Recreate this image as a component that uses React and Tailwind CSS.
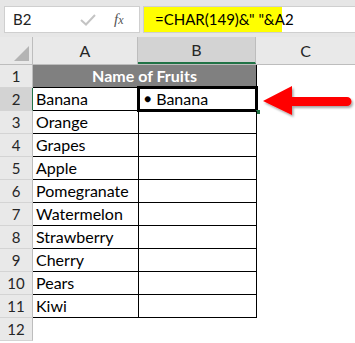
import React from "react"

const fruits = ["Banana", "Orange", "Grapes", "Apple", "Pomegranate", "Watermelon", "Strawberry", "Cherry", "Pears", "Kiwi"]

const font = { fontFamily: "Lato, 'Open Sans', sans-serif" }

const RowHead = ({ n, active }) => (
  <div
    className={`w-[33px] shrink-0 flex items-center justify-center text-[15px] text-[#262626] border-r ${
      active ? "bg-[#d3d3d3] border-[#217346]" : "bg-[#e9e9e9] border-[#bdbdbd]"
    } border-b border-b-[#d4d4d4]`}
  >
    {n}
  </div>
)

const App = () => {
  return (
    <div className="w-[355px] h-[343px] bg-white overflow-hidden relative" style={font}>
      {/* formula bar */}
      <div className="h-[37px] bg-[#e6e6e6] pt-[6px] flex">
        <div className="ml-[4px] w-[136px] h-[27px] bg-white border border-[#cfcfcf] flex items-center text-[15px] text-[#222]">
          <span className="pl-[8px] w-[72px]">B2</span>
          <svg width="16" height="12" viewBox="0 0 16 12" className="ml-[3px]">
            <path d="M1 6 L6 10.5 L15 1" fill="none" stroke="#c4c4c4" strokeWidth="2" />
          </svg>
          <span className="ml-[18px] text-[15px] italic text-[#555]" style={{ fontFamily: "'Liberation Serif', serif" }}>
            f<span className="text-[12px]">x</span>
          </span>
        </div>
        <div className="ml-[3px] flex-1 h-[27px] bg-white border border-[#cfcfcf] border-r-0 flex">
          <div className="w-[138px] h-full bg-[#ffff00] flex items-center pl-[11px] text-[15px] text-black whitespace-pre">
            {'=CHAR(149)&" "&A2'}
          </div>
        </div>
      </div>

      {/* column headers */}
      <div className="h-[28px] flex bg-[#e9e9e9] border-b border-[#bdbdbd] text-[16px] text-[#262626]">
        <div className="w-[33px] shrink-0 border-r border-[#bdbdbd] flex items-end justify-end pr-[3px] pb-[3px]">
          <svg width="15" height="15" viewBox="0 0 15 15">
            <path d="M15 0 L15 15 L0 15 Z" fill="#b4b4b4" />
          </svg>
        </div>
        <div className="w-[105px] border-r border-[#bdbdbd] flex items-center justify-center">A</div>
        <div className="w-[118px] bg-[#d3d3d3] border-r border-[#bdbdbd] border-b-2 border-b-[#217346] flex items-center justify-center">B</div>
        <div className="flex-1 flex items-center justify-center">C</div>
      </div>

      {/* row 1 */}
      <div className="h-[23px] flex">
        <RowHead n={1} />
        <div className="w-[224px] bg-[#808080] border-r border-b border-black flex items-center justify-center text-white font-bold text-[16px]">
          Name of Fruits
        </div>
        <div className="flex-1" />
      </div>

      {fruits.map((f, i) => (
        <div key={f} className="h-[23px] flex">
          <RowHead n={i + 2} active={i === 0} />
          <div className="w-[106px] border-r border-b border-black flex items-center pl-[3px] text-[16px] text-black">
            {f}
          </div>
          <div className="w-[118px] border-r border-b border-black flex items-center pl-[5px] text-[16px] text-black relative">
            {i === 0 && (
              <>
                <span className="mr-[5px] text-[12px]">●</span>Banana
                <div className="absolute -left-[2px] -top-[2px] -right-[2px] -bottom-[2px] border-[3px] border-black" />
                <div className="absolute -right-[4px] -bottom-[4px] w-[4px] h-[4px] bg-[#217346]" />
              </>
            )}
          </div>
          <div className="flex-1" />
        </div>
      ))}

      <div className="h-[23px] flex">
        <RowHead n={12} />
        <div className="flex-1" />
      </div>

      {/* arrow */}
      <svg className="absolute left-[262px] top-[84px]" width="93" height="36" viewBox="0 0 93 36">
        <defs>
          <filter id="sh" x="-10%" y="-20%" width="130%" height="160%">
            <feDropShadow dx="1.5" dy="2" stdDeviation="1.2" floodColor="#000" floodOpacity="0.35" />
          </filter>
        </defs>
        <path d="M1 17 L30 2 L30 13 L85 13 A4.5 4.5 0 0 1 85 22 L30 22 L30 31 Z" fill="#ff0000" filter="url(#sh)" />
      </svg>
    </div>
  )
}

export default App
